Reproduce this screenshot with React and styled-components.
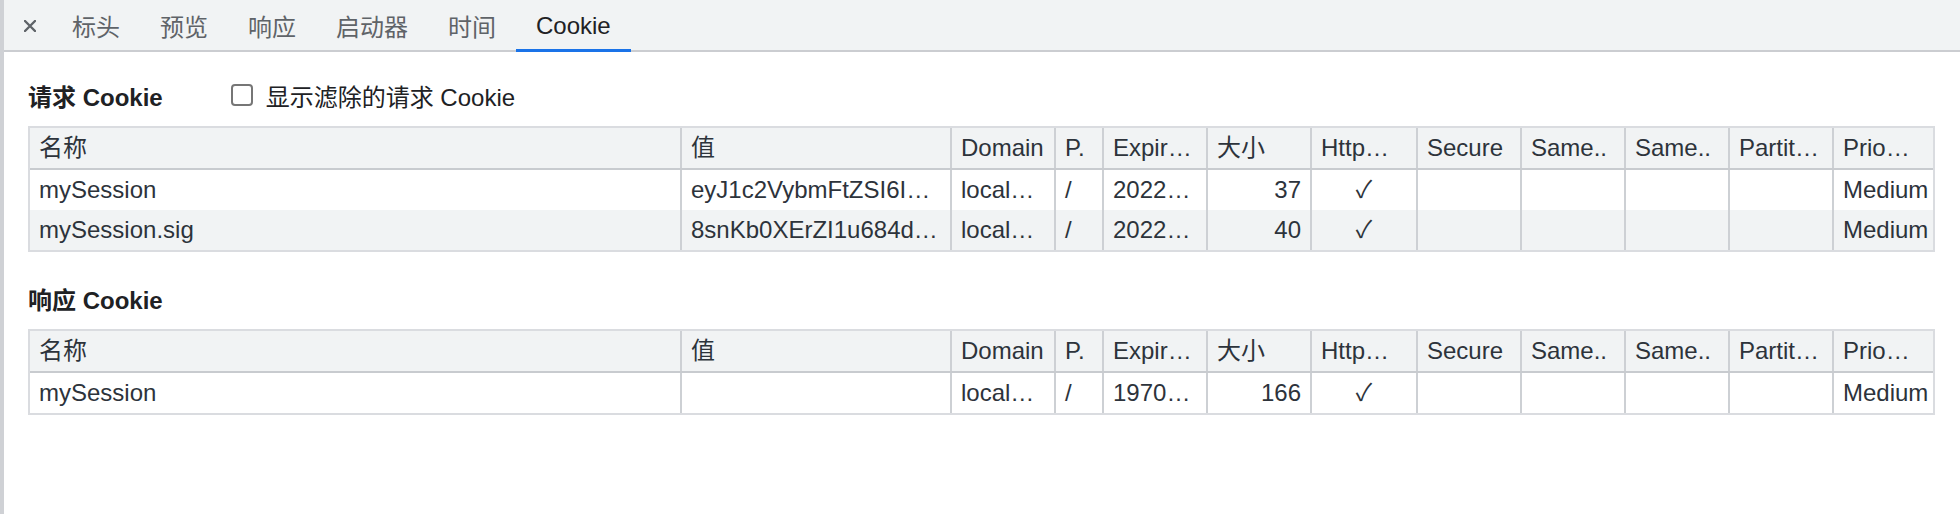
import React from 'react';
import styled, { createGlobalStyle } from 'styled-components';

const GlobalStyle = createGlobalStyle`
  html, body {
    margin: 0;
    padding: 0;
    background: #ffffff;
  }
  body {
    font-family: "Liberation Sans", "Noto Sans CJK SC", sans-serif;
  }
`;

// shared column template for header + rows
const COLUMNS = 'minmax(0, 1fr) 270px 104px 48px 104px 104px 106px 104px 104px 104px 104px 101px';

const headers = ['名称', '值', 'Domain', 'P.', 'Expir…', '大小', 'Http…', 'Secure', 'Same..', 'Same..', 'Partit…', 'Prio…'];
const align = ['left', 'left', 'left', 'left', 'left', 'right', 'center', 'left', 'left', 'left', 'left', 'left'];

const requestCookies = [
    ['mySession', 'eyJ1c2VybmFtZSI6I…', 'local…', '/', '2022…', '37', '✓', '', '', '', '', 'Medium'],
    ['mySession.sig', '8snKb0XErZI1u684d…', 'local…', '/', '2022…', '40', '✓', '', '', '', '', 'Medium'],
];

const responseCookies = [
    ['mySession', '', 'local…', '/', '1970…', '166', '✓', '', '', '', '', 'Medium'],
];

const tabs = ['标头', '预览', '响应', '启动器', '时间', 'Cookie'];

const Frame = styled.div`
    display: flex;
    height: 514px;
    background: #ffffff;
`

const SideEdge = styled.div`
    width: 4px;
    flex: none;
    background: #cfd1d5;
`

const Panel = styled.div`
    flex: 1;
    min-width: 0;
    display: flex;
    flex-direction: column;
`

const TabBar = styled.div`
    display: flex;
    height: 52px;
    box-sizing: border-box;
    background: #f1f3f4;
    border-bottom: 2px solid #cbcdd1;
`

const CloseButton = styled.button`
    width: 48px;
    margin-bottom: -2px;
    padding: 0 0 0 4px;
    border: 0;
    background: transparent;
    display: flex;
    align-items: center;
    justify-content: center;
    color: #5f6368;
`

const Tab = styled.div`
    display: flex;
    align-items: center;
    padding: 2px 20px 0;
    margin-bottom: -2px;
    border-bottom: 3px solid ${props => props.$active ? '#1a73e8' : 'transparent'};
    font-size: 24px;
    color: ${props => props.$active ? '#202124' : '#5f6368'};
    white-space: nowrap;
`

const Content = styled.div`
    display: flex;
    flex-direction: column;
    gap: 30px;
    padding: 27px 25px 0 24px;
`

const SectionHeader = styled.div`
    display: flex;
    align-items: center;
    height: 32px;
    margin-bottom: 15px;
`

const SectionTitle = styled.div`
    font-size: 24px;
    font-weight: 700;
    color: #202124;
`

const FilterToggle = styled.label`
    display: flex;
    align-items: center;
    gap: 13px;
    margin-left: 68px;
    font-size: 24px;
    color: #202124;
`

const CheckBox = styled.span`
    width: 22px;
    height: 22px;
    box-sizing: border-box;
    border: 2px solid #767676;
    border-radius: 4px;
    background: #ffffff;
`

const Table = styled.div`
    border: 2px solid #dadce0;
    font-size: 24px;
    color: #2d333b;
`

const Row = styled.div`
    display: grid;
    grid-template-columns: ${COLUMNS};
    background: ${props => props.$head || props.$striped ? '#f1f3f4' : '#ffffff'};
    border-bottom: ${props => props.$head ? '2px solid #c8cbcf' : '0'};
`

const Cell = styled.div`
    box-sizing: border-box;
    height: 40px;
    line-height: 40px;
    padding: 0 9px;
    overflow: hidden;
    white-space: nowrap;
    text-align: ${props => props.$align};
    border-left: ${props => props.$first ? '0' : '2px solid #cdd0d4'};
`

const CookieTable = ({ rows }) => (
    <Table>
        <Row $head>
            {headers.map((h, i) => (
                <Cell key={i} $first={i === 0} $align="left">{h}</Cell>
            ))}
        </Row>
        {rows.map((row, r) => (
            <Row key={r} $striped={r % 2 === 1}>
                {row.map((v, i) => (
                    <Cell key={i} $first={i === 0} $align={align[i]}>{v}</Cell>
                ))}
            </Row>
        ))}
    </Table>
);

const App = () => {
    return (
        <>
            <GlobalStyle />
            <Frame>
                <SideEdge />
                <Panel>
                    <TabBar>
                        <CloseButton aria-label="close">
                            <svg width="12" height="12" viewBox="0 0 12 12">
                                <path d="M1 1 L11 11 M11 1 L1 11" stroke="currentColor" strokeWidth="2.4" strokeLinecap="round" />
                            </svg>
                        </CloseButton>
                        {tabs.map(t => (
                            <Tab key={t} $active={t === 'Cookie'}>{t}</Tab>
                        ))}
                    </TabBar>
                    <Content>
                        <section>
                            <SectionHeader>
                                <SectionTitle>请求 Cookie</SectionTitle>
                                <FilterToggle>
                                    <CheckBox />
                                    显示滤除的请求 Cookie
                                </FilterToggle>
                            </SectionHeader>
                            <CookieTable rows={requestCookies} />
                        </section>
                        <section>
                            <SectionHeader>
                                <SectionTitle>响应 Cookie</SectionTitle>
                            </SectionHeader>
                            <CookieTable rows={responseCookies} />
                        </section>
                    </Content>
                </Panel>
            </Frame>
        </>
    );
};

export default App;
